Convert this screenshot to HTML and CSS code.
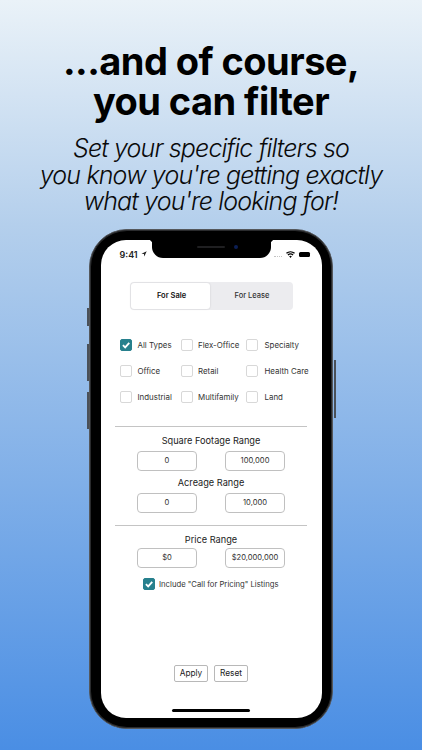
FILE: index.html
```html
<!DOCTYPE html>
<html lang="en">
<head>
<meta charset="utf-8">
<title>Filters</title>
<link rel="stylesheet" href="styles.css">
</head>
<body>
<main class="page">
  <h1 class="title">...and of course,<br>you can filter</h1>
  <p class="subtitle">Set your specific filters so<br>you know you're getting exactly<br>what you're looking for!</p>
  <div class="phone">
    <span class="side side-mute"></span>
    <span class="side side-up"></span>
    <span class="side side-down"></span>
    <span class="side side-power"></span>
    <div class="screen">
      <div class="notch"><span class="speaker"></span><span class="camera"></span></div>
      <div class="status">
        <span class="time">9:41
          <svg class="arrow" viewBox="0 0 10 10"><path d="M9.500.5 .8 4.600l4 .6.7 4z" fill="#222"/></svg>
        </span>
        <span class="status-right">
          <span class="dots"></span>
          <svg class="wifi" viewBox="0 0 12 9"><path d="M6 9 4.200 6.900a2.700 2.700 0 0 1 3.600 0zM3.200 5.800 2 4.500a6 6 0 0 1 8 0L8.800 5.800a4.200 4.200 0 0 0-5.600 0zM1.200 3.600 0 2.300a9 9 0 0 1 12 0l-1.200 1.300a7.200 7.200 0 0 0-9.600 0z" fill="#000"/></svg>
          <span class="battery"></span>
        </span>
      </div>
      <div class="segment">
        <span class="seg seg-active">For Sale</span>
        <span class="seg">For Lease</span>
      </div>
      <div class="types">
        <label class="check"><span class="box box-on"><svg viewBox="0 0 12 12"><path d="M2.300 6.200 5 8.800 9.900 3.400" fill="none" stroke="#fff" stroke-width="2.200"/></svg></span>All Types</label>
        <label class="check"><span class="box"></span>Flex-Office</label>
        <label class="check check-wide"><span class="box"></span>Specialty</label>
        <label class="check"><span class="box"></span>Office</label>
        <label class="check"><span class="box"></span>Retail</label>
        <label class="check check-wide"><span class="box"></span>Health Care</label>
        <label class="check"><span class="box"></span>Industrial</label>
        <label class="check"><span class="box"></span>Multifamily</label>
        <label class="check check-wide"><span class="box"></span>Land</label>
      </div>
      <hr class="rule rule-first">
      <div class="range-title">Square Footage Range</div>
      <div class="range"><span class="field">0</span><span class="field">100,000</span></div>
      <div class="range-title range-title-tight">Acreage Range</div>
      <div class="range"><span class="field">0</span><span class="field">10,000</span></div>
      <hr class="rule rule-second">
      <div class="range-title">Price Range</div>
      <div class="range range-price"><span class="field">$0</span><span class="field">$20,000,000</span></div>
      <label class="include"><span class="box box-on"><svg viewBox="0 0 12 12"><path d="M2.300 6.200 5 8.800 9.900 3.400" fill="none" stroke="#fff" stroke-width="2.200"/></svg></span>Include "Call for Pricing" Listings</label>
      <div class="actions">
        <span class="btn">Apply</span>
        <span class="btn">Reset</span>
      </div>
      <div class="home"></div>
    </div>
  </div>
</main>
</body>
</html>
```
FILE: styles.css
```css
* { box-sizing: border-box; }
html, body { margin: 0; padding: 0; }
body { font-family: Inter, "Liberation Sans", sans-serif; }
.page {
  width: 422px;
  height: 750px;
  overflow: hidden;
  display: flex;
  flex-direction: column;
  align-items: center;
  background: linear-gradient(180deg, #eaf2f8 0%, #b4cfec 30%, #4a8ee4 100%);
  color: #000;
}
.title {
  margin: 40.500px 0 0;
  font-size: 38px;
  line-height: 40px;
  font-weight: 700;
  text-align: center;
  letter-spacing: -0.55px;
}
.subtitle {
  margin: 14.500px 0 0;
  font-size: 25px;
  line-height: 26.500px;
  font-style: italic;
  font-weight: 300;
  text-align: center;
  letter-spacing: -0.85px;
  color: #0a0a0a;
}
.phone {
  position: relative;
  flex: none;
  margin-top: 14.500px;
  width: 244px;
  height: 500px;
  padding: 9.500px 10.500px;
  background: #000;
  border: 1.500px solid #55585c;
  border-radius: 38px;
  box-shadow: inset 0 0 0 1px #2a2b2d;
}
.side { position: absolute; width: 2px; background: #4a5058; }
.side-mute { left: -3.500px; top: 77.500px; height: 18px; }
.side-up { left: -3.500px; top: 114px; height: 37px; }
.side-down { left: -3.500px; top: 162px; height: 37px; }
.side-power { right: -3.500px; top: 130px; height: 58px; }
.screen {
  position: relative;
  height: 478px;
  background: #fff;
  border-radius: 25px;
  overflow: hidden;
  font-size: 7.900px;
  color: #333;
}
.notch {
  position: absolute;
  left: 51px;
  top: 0;
  width: 119px;
  height: 18px;
  display: flex;
  align-items: center;
  justify-content: center;
  gap: 9px;
  padding: 0 0 4px 13px;
  background: #000;
  border-radius: 0 0 11px 11px;
}
.notch::before,
.notch::after {
  content: "";
  position: absolute;
  top: 0;
  width: 4px;
  height: 4px;
}
.notch::before { left: -4px; background: radial-gradient(circle at 0 100%, transparent 4px, #000 4.500px); }
.notch::after { right: -4px; background: radial-gradient(circle at 100% 100%, transparent 4px, #000 4.500px); }
.speaker { width: 28px; height: 2px; border-radius: 1px; background: #1f1f21; }
.camera { width: 4px; height: 4px; border-radius: 50%; background: #0c1f55; }
.status {
  display: flex;
  justify-content: space-between;
  align-items: center;
  height: 29px;
  padding: 0 12px 0 19px;
}
.time { display: flex; align-items: center; gap: 3px; font-size: 9px; font-weight: 600; color: #222; }
.arrow { width: 6px; height: 6px; }
.status-right { display: flex; align-items: center; gap: 4px; }
.dots { align-self: flex-end; width: 8px; height: 1px; margin: 0 0 1px; border-top: 1px dotted #c4c4c4; }
.wifi { width: 9px; height: 7px; }
.battery { width: 11px; height: 5px; border-radius: 1.500px; background: #000; }
.segment {
  display: flex;
  width: 163px;
  height: 28px;
  margin: 13px 0 0 29px;
  padding: 1px;
  background: #ececef;
  border-radius: 4px;
  font-size: 7.500px;
  font-weight: 500;
}
.seg { flex: 1; display: flex; align-items: center; justify-content: center; padding-left: 3px; color: #333; }
.seg-active {
  flex: none;
  width: 79px;
  background: #fff;
  border-radius: 3px;
  color: #111;
  font-weight: 600;
  box-shadow: 0 0 2px rgba(0, 0, 0, .15);
}
.types {
  display: grid;
  grid-template-columns: 60.500px 65px auto;
  grid-auto-rows: 26px;
  margin: 22px 0 0 19.500px;
}
.check { display: flex; align-items: center; gap: 5.500px; white-space: nowrap; }
.check-wide { gap: 7px; }
.box {
  flex: none;
  display: block;
  width: 12px;
  height: 12px;
  border: 1px solid #d8d8d8;
  border-radius: 2px;
  background: #fff;
}
.box-on { background: #27808d; border-color: #27808d; }
.box svg { display: block; width: 100%; height: 100%; }
.rule { height: 0; width: 192px; margin: 0 0 0 14px; border: 0; border-top: 1px solid #c4c4c4; }
.rule-first { margin-top: 16px; }
.rule-second { margin-top: 12px; }
.range-title {
  margin-top: 7px;
  height: 13px;
  line-height: 13px;
  text-align: center;
  font-size: 9.200px;
  color: #222;
}
.range-title-tight { margin-top: 5px; }
.range { display: flex; justify-content: center; gap: 28px; margin-top: 4px; }
.range-price { margin-top: 2px; }
.field {
  display: flex;
  align-items: center;
  justify-content: center;
  width: 60px;
  height: 20px;
  border: 1px solid #c0c0c0;
  border-radius: 4px;
  font-size: 7.600px;
  color: #333;
}
.include {
  display: flex;
  align-items: center;
  justify-content: center;
  gap: 4.500px;
  margin-top: 10.500px;
  padding-right: 1px;
  font-size: 7.700px;
}
.actions {
  display: flex;
  justify-content: center;
  gap: 6px;
  margin-top: 74.500px;
}
.btn {
  display: flex;
  align-items: center;
  justify-content: center;
  width: 34px;
  height: 17px;
  border: 1px solid #b8b8b8;
  border-radius: 2px;
  font-size: 8.300px;
  color: #222;
}
.home { width: 78px; height: 3px; margin: 27px auto 0; border-radius: 2px; background: #000; }
```
